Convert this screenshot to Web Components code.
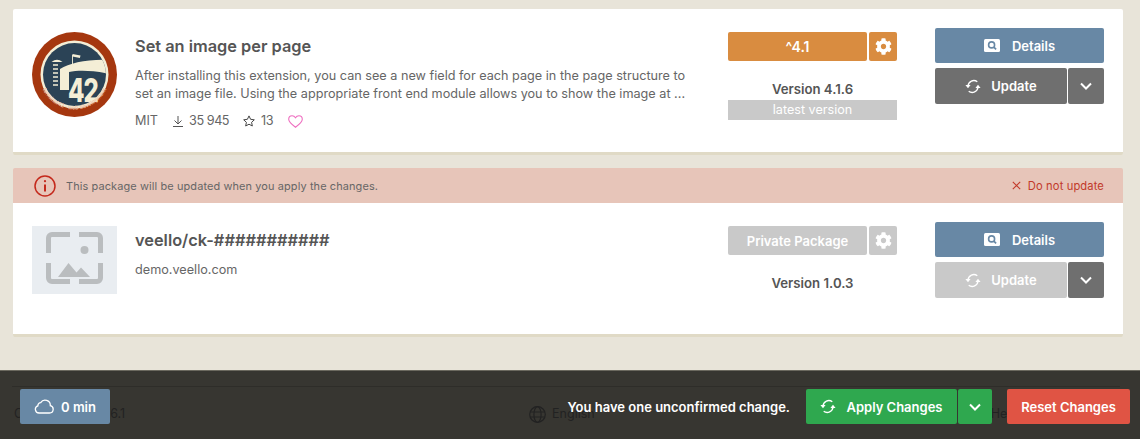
<!DOCTYPE html>
<html lang="en"><head><meta charset="utf-8"><title>Packages</title>
<style>
html,body{margin:0;padding:0}
body{width:1140px;height:439px;overflow:hidden;background:#e8e4d9;font:13px/18px Inter,"Liberation Sans",sans-serif;color:#555;display:flex;flex-direction:column}
</style></head><body>
<x-page>
  <x-package title-text="Set an image per page" height="143" style="margin-top:9px" version="Version 4.1.6" constraint="^4.1" tone="orange" latest update-tone="dark">
    <x-logo slot="logo"></x-logo>
    <span slot="desc">After installing this extension, you can see a new field for each page in the page structure to<br>set an image file. Using the appropriate front end module allows you to show the image at ...</span>
    <x-meta slot="meta"></x-meta>
  </x-package>
  <x-notice style="margin-top:13px">This package will be updated when you apply the changes.</x-notice>
  <x-package title-text="veello/ck-###########" height="131" flat version="Version 1.0.3" constraint="Private Package" tone="muted" update-tone="muted">
    <x-placeholder slot="logo"></x-placeholder>
    <span slot="desc">demo.veello.com</span>
  </x-package>
</x-page>
<x-footer></x-footer>
<script>
const ICONS={
 cog:'<svg width="17" height="17" viewBox="0 0 512 512" fill="currentColor"><path d="M487.4 315.7l-42.6-24.6c4.3-23.2 4.3-47 0-70.2l42.6-24.6c4.9-2.8 7.1-8.6 5.5-14-11.1-35.6-30-67.8-54.7-94.6-3.8-4.1-10-5.1-14.8-2.3L380.8 110c-17.9-15.4-38.5-27.3-60.8-35.1V25.8c0-5.6-3.9-10.5-9.4-11.7-36.7-8.2-74.3-7.8-109.2 0-5.5 1.2-9.4 6.1-9.4 11.7V75c-22.2 7.9-42.8 19.8-60.8 35.1L88.7 85.5c-4.9-2.8-11-1.9-14.8 2.3-24.7 26.7-43.6 58.9-54.7 94.6-1.7 5.4.6 11.2 5.5 14L67.3 221c-4.3 23.2-4.3 47 0 70.2l-42.6 24.6c-4.9 2.8-7.1 8.6-5.5 14 11.1 35.6 30 67.8 54.7 94.6 3.8 4.1 10 5.1 14.8 2.3l42.6-24.6c17.9 15.4 38.5 27.3 60.8 35.1v49.2c0 5.6 3.9 10.5 9.4 11.7 36.7 8.2 74.3 7.8 109.2 0 5.5-1.2 9.4-6.1 9.4-11.7v-49.2c22.2-7.9 42.8-19.8 60.8-35.1l42.6 24.6c4.9 2.8 11 1.9 14.8-2.3 24.7-26.7 43.6-58.9 54.7-94.6 1.5-5.5-.7-11.3-5.6-14.1zM256 336c-44.1 0-80-35.9-80-80s35.9-80 80-80 80 35.9 80 80-35.9 80-80 80z"/></svg>',
 sync:'<svg width="16" height="15" viewBox="0 0 16 15" fill="none" stroke="currentColor" stroke-width="1.4"><path d="M12.300 2.800A5.800 5.800 0 0 0 3 7M3.700 12.200A5.800 5.800 0 0 0 13 8"/><path d="M.4 6h5.200L3 9.300zM15.600 9H10.400L13 5.700z" fill="currentColor" stroke="none"/></svg>',
 chev:'<svg width="12" height="8" viewBox="0 0 12 8" fill="none" stroke="currentColor" stroke-width="2"><path d="M1 1.500l5 5 5-5"/></svg>',
 search:'<svg width="16" height="13" viewBox="0 0 16 13"><rect width="16" height="13" rx="1.500" fill="currentColor"/><circle cx="7.600" cy="5.900" r="3" fill="none" stroke="#6888a5" stroke-width="1.600"/><path d="M9.800 8.100l2.300 2.200" stroke="#6888a5" stroke-width="1.700"/></svg>'
};
function def(name,css,html,init){
  customElements.define(name,class extends HTMLElement{
    connectedCallback(){ if(this.shadowRoot)return; const s=this.attachShadow({mode:'open'});
      s.innerHTML='<style>'+css+'</style>'+(typeof html==='function'?html(this):html); if(init)init(this,s); }
  });
}
def('x-page',':host{display:block;padding:0 17px 0 13px}','<slot></slot>');

def('x-btn',`:host{display:flex;align-items:center;justify-content:center;gap:var(--gap,10px);box-sizing:border-box;height:var(--h,35px);border-radius:2px;color:#fff;font:600 var(--fs,13px)/18px Inter,"Liberation Sans",sans-serif;background:var(--bg,#6888a5)}
 svg{display:block}`,
 el=>(el.getAttribute('icon')?ICONS[el.getAttribute('icon')]:'')+'<slot></slot>');

def('x-package',`:host{display:grid;grid-template-columns:85px 1fr 169px 207px;box-sizing:border-box;background:#fff;border-bottom:3px solid #e0dac6;padding:0 19px;border-radius:2px}
 :host([flat]){border-radius:0 0 2px 2px}
 .logo{margin-top:23px}
 .info{padding:27px 0 0 18px;min-width:0}
 h3{margin:0;font:600 16.350px/20px Inter,"Liberation Sans",sans-serif;color:#555}
 .desc{margin-top:11px;font-size:12.660px;line-height:18px;color:#666;white-space:nowrap}
 .meta{margin-top:9px}
 .ver{margin:23px 0 0;display:flex;flex-direction:column}
 .row{display:flex;gap:2px}
 .c{--h:29px;flex:1}
 .g{--h:29px;width:28px;flex:none}
 .v{margin-top:19px;text-align:center;font:600 13.200px/18px Inter,"Liberation Sans",sans-serif;color:#555}
 .l{margin-top:2px;height:20px;background:#c9c9c9;color:#fff;text-align:center;font:12.600px/20px Inter,"Liberation Sans",sans-serif}
 .act{margin-top:19px;margin-left:38px;display:flex;flex-direction:column;gap:5px}
 .u{--h:36px;flex:1}
 .s{--h:36px;width:36px;flex:none;--bg:#6f6f6f}
 .row2{display:flex;gap:1px}`,
 el=>{const o=el.getAttribute('tone')==='orange';const bg=o?'#d98c40':'#c9c9c9';const ub=el.getAttribute('update-tone')==='dark'?'#6f6f6f':'#c9c9c9';
 return `<div class="logo"><slot name="logo"></slot></div>
 <div class="info"><h3>${el.getAttribute('title-text')}</h3><div class="desc"><slot name="desc"></slot></div><div class="meta"><slot name="meta"></slot></div></div>
 <div class="ver"><div class="row"><x-btn class="c" style="--bg:${bg};--fs:${o?14:13}px">${el.getAttribute('constraint')}</x-btn><x-btn class="g" icon="cog" style="--bg:${bg}"></x-btn></div>
 <div class="v">${el.getAttribute('version')}</div>${el.hasAttribute('latest')?'<div class="l">latest version</div>':''}</div>
 <div class="act"><x-btn icon="search" style="--gap:12px">Details</x-btn><div class="row2"><x-btn class="u" icon="sync" style="--bg:${ub}">Update</x-btn><x-btn class="s" icon="chev"></x-btn></div></div>`},
 (el)=>{el.style.height=el.getAttribute('height')*1+3+'px'; });

def('x-logo',':host{display:block;width:85px;height:85px}svg{display:block}text{font-family:Inter,"Liberation Sans",sans-serif}',
`<svg width="85" height="85" viewBox="0 0 85 85">
<defs><clipPath id="c"><circle cx="42.500" cy="42.500" r="31.500"/></clipPath></defs>
<circle cx="42.500" cy="42.500" r="42.500" fill="#a5370f"/><circle cx="42.500" cy="42.500" r="34" fill="#f4eed6"/><circle cx="42.500" cy="42.500" r="31.500" fill="#2b4356"/>
<path clip-path="url(#c)" d="M28 37C38 31 55 27 78 28V42C60 38 46 38 37 40V58H28Z" fill="#f4eed6"/>
<path d="M19.500 30q5.500-4.500 11 0z" fill="#f4eed6"/><path d="M21 33h5M21 37h5M21 41h5M21 45h5M21 49h5M21 53h5" stroke="#f4eed6" stroke-width="1.300" fill="none"/>
<path d="M40.500 33V23" stroke="#f4eed6" stroke-width=".9"/><path d="M40.500 22l8 1.500-.6 2.500-7.400-1.500z" fill="#f4eed6"/>
<text transform="translate(36 70) scale(1 1.360)" font-size="24" font-weight="800" fill="#f4eed6" letter-spacing="-1">42</text>
<path id="a" d="M7.500 42.500A35 35 0 0 0 77.500 42.500" fill="none"/><text font-size="5.400" font-weight="600" fill="#efc3a8"><textPath href="#a" startOffset="50%" text-anchor="middle">terminal42 · web development</textPath></text>
</svg>`);

def('x-placeholder',':host{display:block;width:85px;height:68px;background:#e9edf1}svg{display:block}',
`<svg width="85" height="68" viewBox="0 0 85 68" fill="#babdbf"><path d="M14 27V12a6 6 0 0 1 6-6h18v5H20a1 1 0 0 0-1 1v15zM47 6h18a6 6 0 0 1 6 6v15h-5V12a1 1 0 0 0-1-1H47zM14 37h5v15a1 1 0 0 0 1 1h18v5H20a6 6 0 0 1-6-6zM66 37h5v15a6 6 0 0 1-6 6H47v-5h18a1 1 0 0 0 1-1z"/><circle cx="52.500" cy="24" r="4"/><path d="M26 51l10.500-14 8 9.500 4.500-5 9 9.500z"/></svg>`);

def('x-meta',':host{display:flex;align-items:center;font-size:12.660px;line-height:18px;color:#666}svg{display:block}.i{display:flex;align-items:center;gap:6px}.n{letter-spacing:-.45px}',
`<span>MIT</span>
<span class="i" style="margin-left:15px"><svg width="10" height="11" viewBox="0 0 10 11" fill="none" stroke="#555" stroke-width="1"><path d="M5 0v7.500M1.500 4.500L5 8l3.500-3.500M0 10.500h10"/></svg><span class="n">35 945</span></span>
<span class="i" style="margin-left:14px"><svg width="12" height="12" viewBox="0 0 12 12" fill="none" stroke="#444" stroke-width="1"><path d="M6 .9l1.600 3.400 3.700.5-2.700 2.500.7 3.700L6 9.200l-3.300 1.800.7-3.700L.7 4.800l3.700-.5z"/></svg><span class="n">13</span></span>
<svg style="margin-left:15px" width="15" height="13" viewBox="0 0 15 13" fill="none" stroke="#ee6fc0" stroke-width="1.100"><path d="M7.500 12.200C3 8.800.7 6.800.7 4.200.7 2.200 2.200.7 4.100.7c1.400 0 2.600.8 3.400 2.100C8.300 1.500 9.500.7 10.900.7c1.900 0 3.400 1.500 3.400 3.500 0 2.600-2.300 4.600-6.800 8z"/></svg>`);

def('x-notice',':host{display:flex;align-items:center;height:35px;background:#e7c5b9;padding:0 19px 0 21px;font-size:10.950px;letter-spacing:.01em;border-radius:2px 2px 0 0;color:#666}svg{display:block;flex:none}.m{flex:1;margin-left:10px}.x{display:flex;align-items:center;gap:7px;color:#c23a2a;font-size:11.200px}',
`<svg width="22" height="22" viewBox="0 0 22 22" fill="none" stroke="#c4291c"><circle cx="11" cy="11" r="10" stroke-width="1.500"/><path d="M11 9.500v7" stroke-width="2"/><circle cx="11" cy="6.200" r="1.100" fill="#c4291c" stroke="none"/></svg>
<span class="m"><slot></slot></span><span class="x"><svg width="9" height="9" viewBox="0 0 9 9" stroke="#c23a2a" stroke-width="1.100"><path d="M.8.800l7.400 7.400M8.200.800L.8 8.200"/></svg>Do not update</span>`);

def('x-footer',`:host{display:block;position:relative;margin-top:auto;height:69px;background:#373631;border-top:1px solid #6b695f;box-sizing:border-box;color:#222;font-size:12.500px}
 .base{margin:15px 20px 0 12px;border-top:1px solid #2e2d29;display:flex;align-items:center;padding-top:18px;padding-left:2px}
 .base span{line-height:18px}
 .g{display:flex;align-items:center;gap:6px;margin-left:404px}
 svg{display:block}
 .bar{position:absolute;left:20px;right:10px;top:18px;display:flex;align-items:center}
 .msg{margin-left:auto;color:#fff;font:600 13px/18px Inter,"Liberation Sans",sans-serif;margin-right:16px}
 x-btn{--h:35px}
 .split{display:flex;gap:1px}`,
`<div class="base"><span>C</span><span style="margin-left:87px">6.1</span>
 <span class="g"><svg width="17" height="17" viewBox="0 0 17 17" fill="none" stroke="#222" stroke-width="1.200"><circle cx="8.500" cy="8.500" r="7.800"/><ellipse cx="8.500" cy="8.500" rx="3.600" ry="7.800"/><path d="M1 6h15M1 11h15"/></svg><span>English</span></span>
 <span style="margin-left:auto;margin-right:102px">Help</span></div>
 <div class="bar"><x-btn style="width:90px;--gap:7px;--bg:#6888a5"><svg width="20" height="15" viewBox="0 0 20 15" fill="none" stroke="#fff" stroke-width="1.300"><path d="M5 14h10.500a3.700 3.700 0 0 0 .8-7.300A5.200 5.200 0 0 0 6.700 3.600 3 3 0 0 0 3.900 6.800 3.700 3.700 0 0 0 5 14z"/></svg>0 min</x-btn>
 <span class="msg">You have one unconfirmed change.</span>
 <span class="split"><x-btn icon="sync" style="width:151px;--bg:#2fa84f">Apply Changes</x-btn><x-btn icon="chev" style="width:34px;--bg:#2fa84f"></x-btn></span>
 <x-btn style="width:123px;margin-left:15px;--bg:#e05444">Reset Changes</x-btn></div>`);
</script>
</body></html>
